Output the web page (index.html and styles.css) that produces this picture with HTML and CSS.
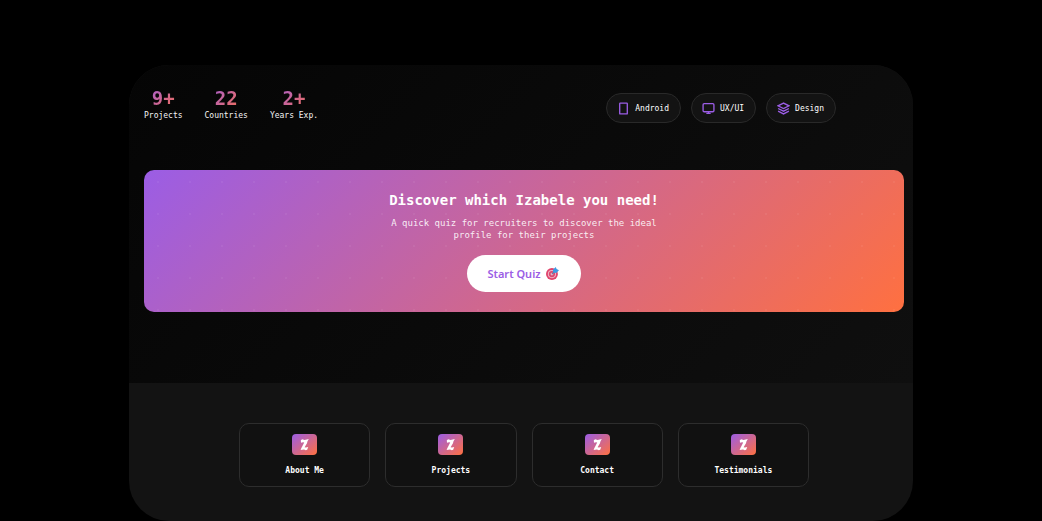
FILE: index.html
```
<!DOCTYPE html>
<html lang="en">
<head>
<meta charset="utf-8">
<meta name="viewport" content="width=device-width, initial-scale=1">
<title>Izabele</title>
<link rel="stylesheet" href="styles.css">
</head>
<body>
<svg class="defs" width="0" height="0" aria-hidden="true">
  <defs>
    <linearGradient id="brand" x1="0" y1="0" x2="1" y2="1">
      <stop offset="0" stop-color="#9b5de5"/>
      <stop offset="1" stop-color="#ff7040"/>
    </linearGradient>
    <symbol id="logo" viewBox="0 0 25 21">
      <rect width="25" height="21" rx="4" fill="url(#brand)"/>
      <path d="M8.8 6.2 10.2 5.2 12.6 6 16.8 5 15.4 7.4 15 9.2 12.6 13.2 14 13.6 16.2 13 15.2 15.8 13.8 16.2 12 15.4 8.6 16 9.4 14 10.2 12.4 12.2 8.6 11 8.2 9 8.8Z" fill="#fff"/>
    </symbol>
  </defs>
</svg>
<div class="shell">
  <main class="hero">
    <header class="top">
      <dl class="stats">
        <div class="stat"><dd>9+</dd><dt>Projects</dt></div>
        <div class="stat"><dd>22</dd><dt>Countries</dt></div>
        <div class="stat"><dd>2+</dd><dt>Years Exp.</dt></div>
      </dl>
      <ul class="skills">
        <li class="skill">
          <svg viewBox="0 0 24 24"><rect x="5" y="2" width="14" height="20" rx="1"/></svg>Android
        </li>
        <li class="skill">
          <svg viewBox="0 0 24 24"><rect x="2" y="3" width="20" height="15" rx="2"/><path d="M12 18v3M8 21h8"/></svg>UX/UI
        </li>
        <li class="skill">
          <svg viewBox="0 0 24 24"><path d="M12 2 2 7l10 5 10-5zM2 12l10 5 10-5M2 17l10 5 10-5"/></svg>Design
        </li>
      </ul>
    </header>
    <section class="banner">
      <h1>Discover which Izabele you need!</h1>
      <p>A quick quiz for recruiters to discover the ideal profile for their projects</p>
      <button class="start" type="button">Start Quiz
        <svg viewBox="0 0 24 24" aria-hidden="true">
          <circle cx="11" cy="13" r="11" fill="#e0446c"/>
          <circle cx="11" cy="13" r="7.6" fill="#f0b4c6"/>
          <circle cx="11" cy="13" r="5.8" fill="#d84870"/>
          <circle cx="11" cy="13" r="2.6" fill="#f0b4c6"/>
          <path d="M11 13 18 6" stroke="#5a7ba5" stroke-width="2"/>
          <path d="M13 10V5l5-5 1.5 3.5L24 6l-5 5z" fill="#3b9be5"/>
        </svg>
      </button>
    </section>
  </main>
  <nav class="links">
    <a class="card" href="#about"><svg><use href="#logo"/></svg>About Me</a>
    <a class="card" href="#projects"><svg><use href="#logo"/></svg>Projects</a>
    <a class="card" href="#contact"><svg><use href="#logo"/></svg>Contact</a>
    <a class="card" href="#testimonials"><svg><use href="#logo"/></svg>Testimonials</a>
  </nav>
</div>
</body>
</html>
```
FILE: styles.css
```
* { box-sizing: border-box; }

body {
  margin: 0;
  padding: 65px 129px 0;
  background: #000;
  color: #fff;
  font-family: "DejaVu Sans Mono", monospace;
}

.defs { position: absolute; }

.shell {
  border-radius: 40px;
  overflow: hidden;
  background: #131313;
}

.hero {
  padding: 22px 9px 71px 15px;
  background: linear-gradient(135deg, #050505, #0f0f0f);
}

.top {
  display: flex;
  justify-content: space-between;
  align-items: center;
  padding-right: 68px;
  margin-bottom: 47px;
}

.stats, .skills {
  display: flex;
  margin: 0;
  padding: 0;
  list-style: none;
}

.stats { gap: 22px; align-self: flex-start; }

.stat { text-align: center; }

.stat dd {
  margin: 0;
  font-size: 19px;
  line-height: 22px;
  font-weight: 700;
  background: linear-gradient(135deg, #9b5de5, #ff7040);
  -webkit-background-clip: text;
  background-clip: text;
  color: transparent;
}

.stat dt {
  font-size: 8px;
  line-height: 13px;
  color: #f4f4f4;
}

.skills { gap: 10px; padding-top: 6px; }

.skill {
  display: flex;
  align-items: center;
  gap: 5px;
  height: 30px;
  padding: 0 11px 0 10px;
  border: 1px solid #292929;
  border-radius: 15px;
  background: #131313;
  font-size: 8px;
}

.skill svg {
  width: 13px;
  height: 13px;
  fill: none;
  stroke: #9b5de5;
  stroke-width: 2.5;
}

.banner {
  display: flex;
  flex-direction: column;
  align-items: center;
  padding: 20px;
  border-radius: 10px;
  text-align: center;
  background:
    radial-gradient(circle at 14px 12px, #ffffff0d 1px, transparent 1px) 0 0 / 32px 32px,
    linear-gradient(135deg, #9b5de5, #ff7040);
}

.banner h1 {
  margin: 0 0 7px;
  font-size: 14px;
  line-height: 20px;
}

.banner p {
  max-width: 300px;
  margin: 0 0 14px;
  font-size: 9px;
  line-height: 12px;
  color: #ffffffe6;
}

.start {
  display: flex;
  align-items: center;
  gap: 5px;
  height: 37px;
  padding: 0 22px 0 20px;
  border: 0;
  border-radius: 19px;
  background: #fff;
  color: #9b5de5;
  font: 600 11px "Noto Sans", sans-serif;
}

.start svg { width: 13px; height: 13px; }

.links {
  display: grid;
  grid-template-columns: repeat(4, 1fr);
  gap: 15px;
  padding: 40px 104px 34px 110px;
}

.card {
  display: flex;
  flex-direction: column;
  align-items: center;
  gap: 10px;
  padding: 10px;
  border: 1px solid #2d2d2d;
  border-radius: 10px;
  background: #111;
  color: #fff;
  font-size: 8px;
  line-height: 11px;
  font-weight: 700;
  text-decoration: none;
}

.card svg { width: 25px; height: 21px; }
```
